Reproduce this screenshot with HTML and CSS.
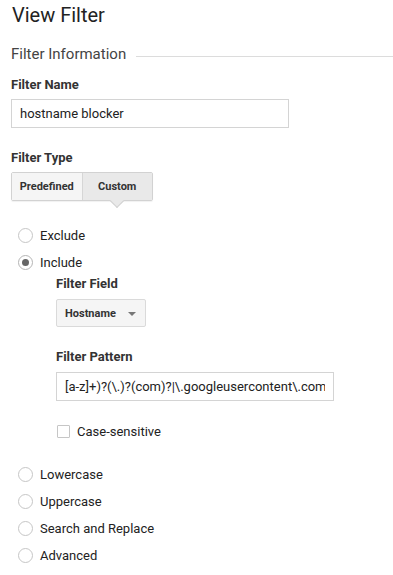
FILE: index.html
```html
<!DOCTYPE html>
<html lang="en">
<head>
<meta charset="utf-8">
<title>View Filter</title>
<link rel="stylesheet" href="styles.css">
</head>
<body>
<main class="page">
  <h1 class="title">View Filter</h1>

  <div class="section-head">
    <h2 class="section-title">Filter Information</h2>
    <span class="rule"></span>
  </div>

  <div class="field-label first">Filter Name</div>
  <input class="text-input name-input" type="text" value="hostname blocker">

  <div class="field-label spaced">Filter Type</div>
  <div class="segmented">
    <button class="seg">Predefined</button>
    <button class="seg active">Custom</button>
  </div>

  <ul class="radio-list">
    <li class="radio-row"><span class="radio"></span><span class="radio-label">Exclude</span></li>
    <li class="radio-item">
      <div class="radio-row"><span class="radio checked"></span><span class="radio-label">Include</span></div>
      <div class="nested">
        <div class="field-label">Filter Field</div>
        <div class="dropdown"><span class="dropdown-text">Hostname</span>
          <svg class="caret" width="8" height="4" viewBox="0 0 8 4"><path d="M0 0 L8 0 L4 4 Z" fill="#777"/></svg>
        </div>

        <div class="field-label spaced">Filter Pattern</div>
        <input class="text-input pattern-input" type="text" value="[a-z]+)?(\.)?(com)?|\.googleusercontent\.com">

        <div class="check-row"><span class="checkbox"></span><span class="check-label">Case-sensitive</span></div>
      </div>
    </li>
    <li class="radio-row"><span class="radio"></span><span class="radio-label">Lowercase</span></li>
    <li class="radio-row"><span class="radio"></span><span class="radio-label">Uppercase</span></li>
    <li class="radio-row"><span class="radio"></span><span class="radio-label">Search and Replace</span></li>
    <li class="radio-row"><span class="radio"></span><span class="radio-label">Advanced</span></li>
  </ul>
</main>
</body>
</html>
```

FILE: styles.css
```css
* { box-sizing: border-box; }

html, body {
  margin: 0;
  padding: 0;
  background: #ffffff;
}

body {
  font-family: Roboto, "Liberation Sans", Arial, sans-serif;
  color: #222;
}

.page {
  padding: 3px 0 0 11px;
}

.title {
  margin: 0;
  padding-left: 1px;
  font-size: 20px;
  line-height: 24px;
  font-weight: 400;
  color: #222;
}

.section-head {
  display: flex;
  margin-top: 17px;
}

.section-title {
  margin: 0;
  font-size: 15px;
  line-height: 20px;
  font-weight: 400;
  color: #444;
}

.rule {
  flex: 1;
  height: 1px;
  margin: 12px 0 0 10px;
  background: #dcdcdc;
}

.field-label {
  font-size: 13px;
  line-height: 16px;
  font-weight: 700;
  color: #333;
}

.field-label.first { margin-top: 13px; }
.field-label.spaced { margin-top: 22px; }

.text-input {
  display: block;
  width: 278px;
  height: 29px;
  margin: 6px 0 0 0;
  padding: 0 8px;
  border: 1px solid #d4d4d4;
  background: #fff;
  font-family: Roboto, "Liberation Sans", Arial, sans-serif;
  font-size: 13px;
  color: #222;
  outline: none;
}

.pattern-input { margin-top: 7px; }

.segmented {
  position: relative;
  display: flex;
  width: 142px;
  height: 29px;
  margin-top: 6px;
  border: 1px solid #d2d2d2;
  border-radius: 2px;
  box-shadow: 0 1px 1px rgba(0,0,0,0.06);
}

.seg {
  position: relative;
  flex: 1;
  margin: 0;
  padding: 0;
  border: 0;
  background: #f5f5f5;
  font-family: Roboto, "Liberation Sans", Arial, sans-serif;
  font-size: 11px;
  font-weight: 700;
  color: #333;
}

.seg + .seg { border-left: 1px solid #d6d6d6; }

.seg.active { background: #e9e9e9; }

.seg.active::after {
  content: "";
  position: absolute;
  left: 50%;
  bottom: -6px;
  width: 9px;
  height: 9px;
  margin-left: -5px;
  background: #e9e9e9;
  border-right: 1px solid #d2d2d2;
  border-bottom: 1px solid #d2d2d2;
  transform: rotate(45deg);
}

.radio-list {
  list-style: none;
  margin: 21px 0 0 0;
  padding: 0;
}

.radio-row {
  display: flex;
  align-items: center;
  height: 27px;
}

.radio {
  width: 15px;
  height: 15px;
  margin-left: 7px;
  border: 1px solid #c6c6c6;
  border-radius: 50%;
  background: #fff;
  display: flex;
  align-items: center;
  justify-content: center;
}

.radio.checked { border-color: #b5b5b5; }

.radio.checked::after {
  content: "";
  width: 7px;
  height: 7px;
  border-radius: 50%;
  background: #666;
}

.radio-label {
  margin-left: 7px;
  font-size: 13px;
  color: #222;
}

.nested {
  margin-left: 45px;
  padding-bottom: 20px;
}

.dropdown {
  display: flex;
  align-items: center;
  justify-content: space-between;
  width: 90px;
  height: 28px;
  margin-top: 7px;
  padding: 0 9px 0 8px;
  border: 1px solid #dadada;
  border-radius: 2px;
  background: #f5f5f5;
}

.dropdown-text {
  font-size: 11px;
  font-weight: 700;
  color: #333;
}

.caret { display: block; margin-top: 1px; }

.check-row {
  display: flex;
  align-items: center;
  height: 20px;
  margin-top: 20px;
}

.checkbox {
  width: 13px;
  height: 13px;
  margin-left: 1px;
  border: 1px solid #c6c6c6;
  border-radius: 1px;
  background: #fff;
}

.check-label {
  margin-left: 7px;
  font-size: 13px;
  color: #222;
}
```
